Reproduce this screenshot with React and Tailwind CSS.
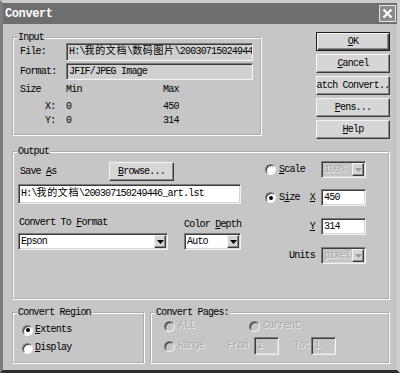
import React from 'react';

const sunken =
  'border border-t-[#7a7a7a] border-l-[#7a7a7a] border-b-[#f2f2f2] border-r-[#f2f2f2] shadow-[inset_1px_1px_0_#3c3c3c,inset_-1px_-1px_0_#d6d6d6]';
const raised =
  'border border-t-[#f4f4f4] border-l-[#f4f4f4] border-b-[#3a3a3a] border-r-[#3a3a3a] shadow-[inset_-1px_-1px_0_#8a8a8a]';
const dis = 'text-[#a8a8a8] [text-shadow:1px_1px_0_#f0f0f0]';

const Cjk = ({ children }) => <span className="tracking-[0.6px]">{children}</span>;
const U = ({ children }) => <span className="underline underline-offset-[1px]">{children}</span>;

const Group = ({ title, className, children }) => (
  <fieldset className={`border-2 border-white [border-style:groove] ${className}`}>
    <legend className="ml-[3px] px-[1px] leading-[12px]">{title}</legend>
    {children}
  </fieldset>
);

const Radio = ({ checked, disabled }) => (
  <span
    className={`w-[11px] h-[11px] shrink-0 rounded-full flex items-center justify-center border border-t-[#7a7a7a] border-l-[#7a7a7a] border-b-[#f2f2f2] border-r-[#f2f2f2] shadow-[inset_1px_1px_0_#3c3c3c] ${
      disabled ? 'bg-[#c6c6c6]' : 'bg-white'
    }`}
  >
    {checked && <span className="w-[4px] h-[4px] rounded-full bg-black" />}
  </span>
);

const Combo = ({ value, className, disabled }) => (
  <div className={`flex items-center h-[17px] ${sunken} ${disabled ? 'bg-[#c6c6c6]' : 'bg-white'} ${className}`}>
    <span className={`flex-1 pl-[2px] overflow-hidden whitespace-nowrap ${disabled ? dis : ''}`}>{value}</span>
    <span className={`w-[12px] h-[13px] mr-[1px] flex items-center justify-center bg-[#d4d4d4] ${raised}`}>
      <svg width="7" height="4" viewBox="0 0 7 4">
        <path d="M0 0h7L3.5 4z" fill={disabled ? '#9c9c9c' : '#000'} />
      </svg>
    </span>
  </div>
);

const Button = ({ children, className = '' }) => (
  <div
    className={`h-[19px] bg-[#d6d6d6] flex items-center justify-center overflow-hidden whitespace-nowrap ${className}`}
  >
    {children}
  </div>
);

export default function App() {
  return (
    <div className="w-[400px] h-[373px] bg-[#c6c6c6] border-[3px] border-t-[#cdcdcd] border-l-[#7d7d7d] border-r-[#cfcfcf] border-b-[#2e2e2e] flex flex-col overflow-hidden font-['Liberation_Mono','Noto_Sans_CJK_SC',monospace] text-[10px] leading-[12px] tracking-[-0.8px] text-black">
      {/* title bar */}
      <div className="h-[21px] shrink-0 bg-[#6e6e6e] flex items-center justify-between pl-[2px] pr-[1px]">
        <span className="text-white font-bold text-[12px] tracking-[-0.4px]">Convert</span>
        <div className="w-[17px] h-[17px] bg-[#8c8c8c] border border-[#e6e6e6] flex items-center justify-center">
          <svg width="11" height="11" viewBox="0 0 11 11">
            <path d="M1.5 1.5l8 8M9.5 1.5l-8 8" stroke="#fff" strokeWidth="2.2" />
          </svg>
        </div>
      </div>

      <div className="pl-[9px] pr-[7px]">
        {/* input + buttons */}
        <div className="mt-[8px] flex justify-between items-start">
          <Group title="Input" className="w-[250px] h-[104px]">
            <div className="px-[6px]">
              <div className="-mt-[1px] flex items-center h-[18px]">
                <span className="w-[46px]">File:</span>
                <div className={`w-[187px] h-[18px] bg-[#cfcfcf] ${sunken} pl-[2px] flex items-center overflow-hidden whitespace-nowrap`}>
                  H:\<Cjk>我的文档</Cjk>\<Cjk>数码图片</Cjk>\200307150249446.jpg
                </div>
              </div>
              <div className="mt-[2px] flex items-center h-[17px]">
                <span className="w-[46px]">Format:</span>
                <div className={`w-[187px] h-[17px] bg-[#cfcfcf] ${sunken} pl-[2px] flex items-center`}>
                  JFIF/JPEG Image
                </div>
              </div>
              <div className="mt-[4px] flex h-[12px]">
                <span className="w-[46px]">Size</span>
                <span className="w-[97px]">Min</span>
                <span>Max</span>
              </div>
              <div className="mt-[5px] flex h-[12px]">
                <span className="w-[46px] pl-[25px]">X:</span>
                <span className="w-[97px]">0</span>
                <span>450</span>
              </div>
              <div className="mt-[2px] flex h-[12px]">
                <span className="w-[46px] pl-[25px]">Y:</span>
                <span className="w-[97px]">0</span>
                <span>314</span>
              </div>
            </div>
          </Group>

          <div className="w-[74px] flex flex-col gap-[3px]">
            <Button className="border border-[#1e1e1e] shadow-[inset_1px_1px_0_#f4f4f4,inset_-1px_-1px_0_#4a4a4a,inset_-2px_-2px_0_#8a8a8a]">
              <U>O</U>K
            </Button>
            <Button className={raised}>
              <U>C</U>ancel
            </Button>
            <Button className={raised}>
              <U>B</U>atch Convert...
            </Button>
            <Button className={raised}>
              <U>P</U>ens...
            </Button>
            <Button className={raised}>
              <U>H</U>elp
            </Button>
          </div>
        </div>

        {/* output */}
        <Group title="Output" className="mt-[7px] w-full h-[154px]">
          <div className="flex pl-[4px]">
            <div className="w-[224px]">
              <div className="mt-[4px] flex items-center h-[19px]">
                <span className="ml-[2px] w-[89px]">
                  Save <U>A</U>s
                </span>
                <Button className={`w-[65px] ${raised}`}>
                  <U>B</U>rowse...
                </Button>
              </div>
              <div className={`mt-[3px] h-[20px] w-[223px] bg-white ${sunken} pl-[2px] flex items-center whitespace-nowrap overflow-hidden`}>
                H:\<Cjk>我的文档</Cjk>\200307150249446_art.lst
              </div>
              <div className="mt-[13px] flex h-[12px]">
                <span className="w-[166px] pl-[1px]">
                  Convert To <U>F</U>ormat
                </span>
                <span className="translate-y-[2px]">
                  Color <U>D</U>epth
                </span>
              </div>
              <div className="mt-[4px] flex">
                <Combo value="Epson" className="w-[150px]" />
                <Combo value="Auto" className="ml-[16px] w-[57px]" />
              </div>
            </div>

            <div className="ml-[22px] w-[102px]">
              <div className="mt-[3px] h-[17px] flex items-center">
                <div className="w-[57px] flex items-center pl-[1px]">
                  <Radio />
                  <span className="ml-[3px]">
                    <U>S</U>cale
                  </span>
                </div>
                <Combo value="100%" className="w-[45px]" disabled />
              </div>
              <div className="mt-[11px] h-[17px] flex items-center">
                <div className="w-[57px] flex items-center pl-[1px]">
                  <Radio checked />
                  <span className="ml-[3px]">
                    S<U>i</U>ze
                  </span>
                  <span className="ml-auto mr-[6px]">
                    <U>X</U>
                  </span>
                </div>
                <div className={`w-[45px] h-[17px] bg-white ${sunken} pl-[2px] flex items-center`}>450</div>
              </div>
              <div className="mt-[12px] h-[17px] flex items-center">
                <div className="w-[57px] flex justify-end pr-[6px]">
                  <U>Y</U>
                </div>
                <div className={`w-[45px] h-[17px] bg-white ${sunken} pl-[2px] flex items-center`}>314</div>
              </div>
              <div className="mt-[12px] h-[17px] flex items-center">
                <div className="w-[57px] flex justify-end pr-[6px]">Units</div>
                <Combo value="pixel" className="w-[45px]" disabled />
              </div>
            </div>
          </div>
        </Group>

        {/* bottom groups */}
        <div className="mt-[7px] flex gap-[5px]">
          <Group title="Convert Region" className="w-[133px] h-[57px]">
            <div className="pl-[8px]">
              <div className="mt-[5px] h-[12px] flex items-center">
                <Radio checked />
                <span className="ml-[2px]">
                  <U>E</U>xtents
                </span>
              </div>
              <div className="mt-[6px] h-[12px] flex items-center">
                <Radio />
                <span className="ml-[2px]">
                  <U>D</U>isplay
                </span>
              </div>
            </div>
          </Group>

          <Group title="Convert Pages:" className="w-[240px] h-[57px]">
            <div className="pl-[12px]">
              <div className="mt-[1px] h-[12px] flex items-center">
                <div className="w-[85px] flex items-center">
                  <Radio disabled />
                  <span className={`ml-[3px] ${dis}`}>All</span>
                </div>
                <Radio disabled />
                <span className={`ml-[3px] ${dis}`}>Current</span>
              </div>
              <div className="mt-[5px] h-[18px] flex items-center">
                <div className="w-[63px] flex items-center">
                  <Radio disabled />
                  <span className={`ml-[3px] ${dis}`}>Range</span>
                </div>
                <span className={`w-[27px] ${dis}`}>From</span>
                <div className={`w-[25px] h-[18px] bg-[#c6c6c6] ${sunken} pl-[2px] flex items-center ${dis}`}>1</div>
                <span className={`ml-[15px] w-[17px] ${dis}`}>To:</span>
                <div className={`w-[25px] h-[18px] bg-[#c6c6c6] ${sunken} pl-[2px] flex items-center ${dis}`}>1</div>
              </div>
            </div>
          </Group>
        </div>
      </div>
    </div>
  );
}
